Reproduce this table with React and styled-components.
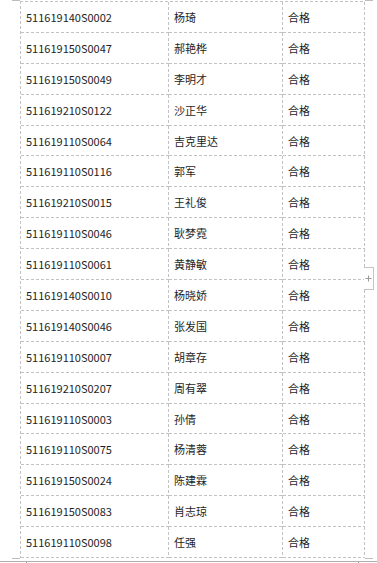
import React from "react";
import styled, { createGlobalStyle } from "styled-components";

const GlobalStyle = createGlobalStyle`
  html, body {
    margin: 0;
    padding: 0;
    background: #fff;
  }
`;

const LINE = "#c2c2c2";
const dashX = `repeating-linear-gradient(90deg, ${LINE} 0 3px, transparent 3px 5px)`;
const dashY = `repeating-linear-gradient(180deg, ${LINE} 0 3px, transparent 3px 5px)`;

const Page = styled.div`
  position: relative;
  display: flex;
  flex-direction: column;
  width: 377px;
  height: 563px;
  overflow: hidden;
  font-family: "Noto Sans CJK SC", "Noto Sans", sans-serif;
`;

// corner crop marks of the page margins
const MarkRow = styled.div`
  display: flex;
  justify-content: space-between;
  height: 1px;
  padding: 0 4px 0 12px;
`;

const Mark = styled.div`
  width: 8px;
  height: 1px;
  background: #bdbdbd;
`;

const TickRow = styled.div`
  display: flex;
  justify-content: space-between;
  height: 2px;
  padding: 0 18px 0 26px;
`;

const Tick = styled.div`
  width: 1px;
  background: #9c9c9c;
`;

const Table = styled.div`
  display: grid;
  grid-template-columns: 148px 114px 82px;
  grid-auto-rows: 30.9px;
  width: 345px;
  margin-left: 20px;
  padding: 1px 0 0 1px;
  box-sizing: border-box;
  background: ${dashX} top left / 100% 1px no-repeat,
    ${dashY} top left / 1px 100% no-repeat;
`;

const Cell = styled.div`
  display: flex;
  align-items: center;
  padding: 0 0 1px 5px;
  font-size: 11px;
  color: #1e1e1e;
  white-space: nowrap;
  background: ${dashX} bottom left / 100% 1px no-repeat,
    ${dashY} top right / 1px 100% no-repeat;
`;

const PageEdge = styled.div`
  margin-top: 2px;
  border-top: 1px solid #b0b0b0;
`;

const AddHandle = styled.div`
  position: absolute;
  left: 364px;
  top: 267px;
  width: 9px;
  height: 21px;
  border: 1px solid #c4c4c4;
  border-left: none;
  background: #fff;
  display: flex;
  align-items: center;
  justify-content: center;
`;

const rows = [
  ["511619140S0002", "杨琦"],
  ["511619150S0047", "郝艳桦"],
  ["511619150S0049", "李明才"],
  ["511619210S0122", "沙正华"],
  ["511619110S0064", "吉克里达"],
  ["511619110S0116", "郭军"],
  ["511619210S0015", "王礼俊"],
  ["511619110S0046", "耿梦霓"],
  ["511619110S0061", "黄静敏"],
  ["511619140S0010", "杨晓娇"],
  ["511619140S0046", "张发国"],
  ["511619110S0007", "胡章存"],
  ["511619210S0207", "周有翠"],
  ["511619110S0003", "孙倩"],
  ["511619110S0075", "杨清蓉"],
  ["511619150S0024", "陈建霖"],
  ["511619150S0083", "肖志琼"],
  ["511619110S0098", "任强"],
];

export default function App() {
  return (
    <>
      <GlobalStyle />
      <Page>
        <MarkRow>
          <Mark />
          <Mark />
        </MarkRow>
        <Table>
          {rows.map(([id, name]) => (
            <React.Fragment key={id}>
              <Cell>{id}</Cell>
              <Cell>{name}</Cell>
              <Cell>合格</Cell>
            </React.Fragment>
          ))}
        </Table>
        <MarkRow>
          <Mark />
          <Mark />
        </MarkRow>
        <PageEdge />
        <TickRow>
          <Tick />
          <Tick />
        </TickRow>

        <AddHandle>
          <svg width="7" height="7" viewBox="0 0 7 7">
            <path d="M3.5 0.5v6M0.5 3.5h6" stroke="#9a9a9a" strokeWidth="1" />
          </svg>
        </AddHandle>
      </Page>
    </>
  );
}
